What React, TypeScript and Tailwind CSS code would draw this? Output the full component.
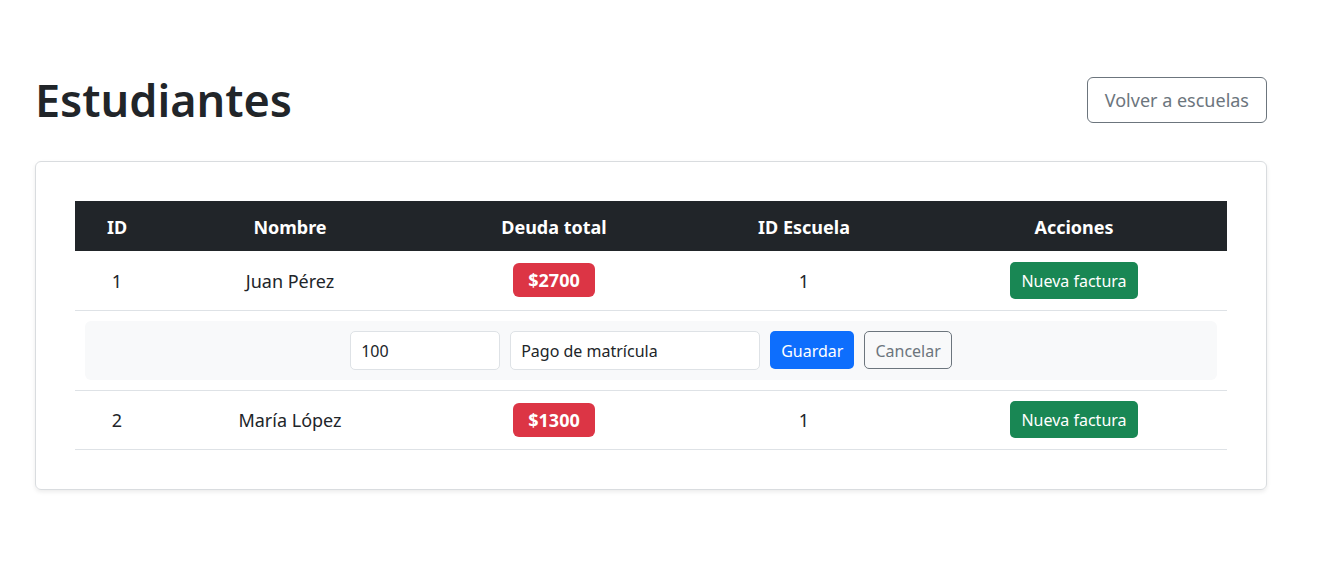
import { FC } from "react";

interface Student {
    id: number;
    name: string;
    debt: number;
    schoolId: number;
}

const students: Student[] = [
    { id: 1, name: "Juan Pérez", debt: 2700, schoolId: 1 },
    { id: 2, name: "María López", debt: 1300, schoolId: 1 },
];

const font = { fontFamily: '"Noto Sans", "Open Sans", sans-serif' };

const StudentRow: FC<{ student: Student }> = ({ student }) => (
    <tr className="border-b border-[#dee2e6] text-[18px] text-[#212529]">
        <td className="h-[59px] pt-[2px] text-center align-middle">{student.id}</td>
        <td className="pt-[2px] text-center align-middle">{student.name}</td>
        <td className="text-center align-middle">
            <span className="inline-flex h-[34px] items-center rounded-[6px] bg-[#dc3545] px-[15px] pt-[1px] text-[18px] font-bold text-white">
                ${student.debt}
            </span>
        </td>
        <td className="pt-[2px] text-center align-middle">{student.schoolId}</td>
        <td className="text-center align-middle">
            <button className="h-[37px] rounded-[5px] bg-[#198754] px-[11px] pt-[1px] text-[16px] text-white">
                Nueva factura
            </button>
        </td>
    </tr>
);

const InvoiceRow: FC = () => (
    <tr className="border-b border-[#dee2e6]">
        <td colSpan={5} className="p-[10px]">
            <div className="flex items-center justify-center gap-[10px] rounded-[6px] bg-[#f8f9fa] py-[10px]">
                <input
                    defaultValue="100"
                    className="h-[39px] w-[150px] rounded-[5px] border border-[#dee2e6] bg-white px-[10px] pt-[1px] text-[16px] text-[#212529] outline-none"
                />
                <input
                    defaultValue="Pago de matrícula"
                    className="h-[39px] w-[250px] rounded-[5px] border border-[#dee2e6] bg-white px-[10px] pt-[1px] text-[16px] text-[#212529] outline-none"
                />
                <button className="h-[38px] rounded-[5px] bg-[#0d6efd] px-[11px] pt-[1px] text-[16px] text-white">
                    Guardar
                </button>
                <button className="h-[38px] rounded-[5px] border border-[#6c757d] px-[10px] pt-[1px] text-[16px] text-[#6c757d]">
                    Cancelar
                </button>
            </div>
        </td>
    </tr>
);

const App: FC = () => {
    return (
        <div className="min-h-[588px] bg-white" style={font}>
            <div className="ml-[35px] mr-[58px] pt-[77px]">
                <div className="flex h-[46px] items-center justify-between">
                    <h1 className="text-[45px] font-semibold leading-[50px] text-[#212529]">
                        Estudiantes
                    </h1>
                    <button className="h-[46px] rounded-[6px] border border-[#6c757d] px-[17px] text-[18px] text-[#6c757d]">
                        Volver a escuelas
                    </button>
                </div>
                <div className="mt-[38px] rounded-[6px] border border-[#d9dcdf] p-[39px] shadow-[0_2px_4px_rgba(0,0,0,0.08)]">
                    <table className="w-full table-fixed border-collapse">
                        <colgroup>
                            <col className="w-[84px]" />
                            <col className="w-[262px]" />
                            <col className="w-[266px]" />
                            <col className="w-[234px]" />
                            <col />
                        </colgroup>
                        <thead>
                            <tr className="h-[50px] bg-[#212529] text-[18px] font-bold text-white">
                                <th className="pt-[2px] text-center">ID</th>
                                <th className="pt-[2px] text-center">Nombre</th>
                                <th className="pt-[2px] text-center">Deuda total</th>
                                <th className="pt-[2px] text-center">ID Escuela</th>
                                <th className="pt-[2px] text-center">Acciones</th>
                            </tr>
                        </thead>
                        <tbody>
                            <StudentRow student={students[0]} />
                            <InvoiceRow />
                            <StudentRow student={students[1]} />
                        </tbody>
                    </table>
                </div>
            </div>
        </div>
    );
};

export default App;
